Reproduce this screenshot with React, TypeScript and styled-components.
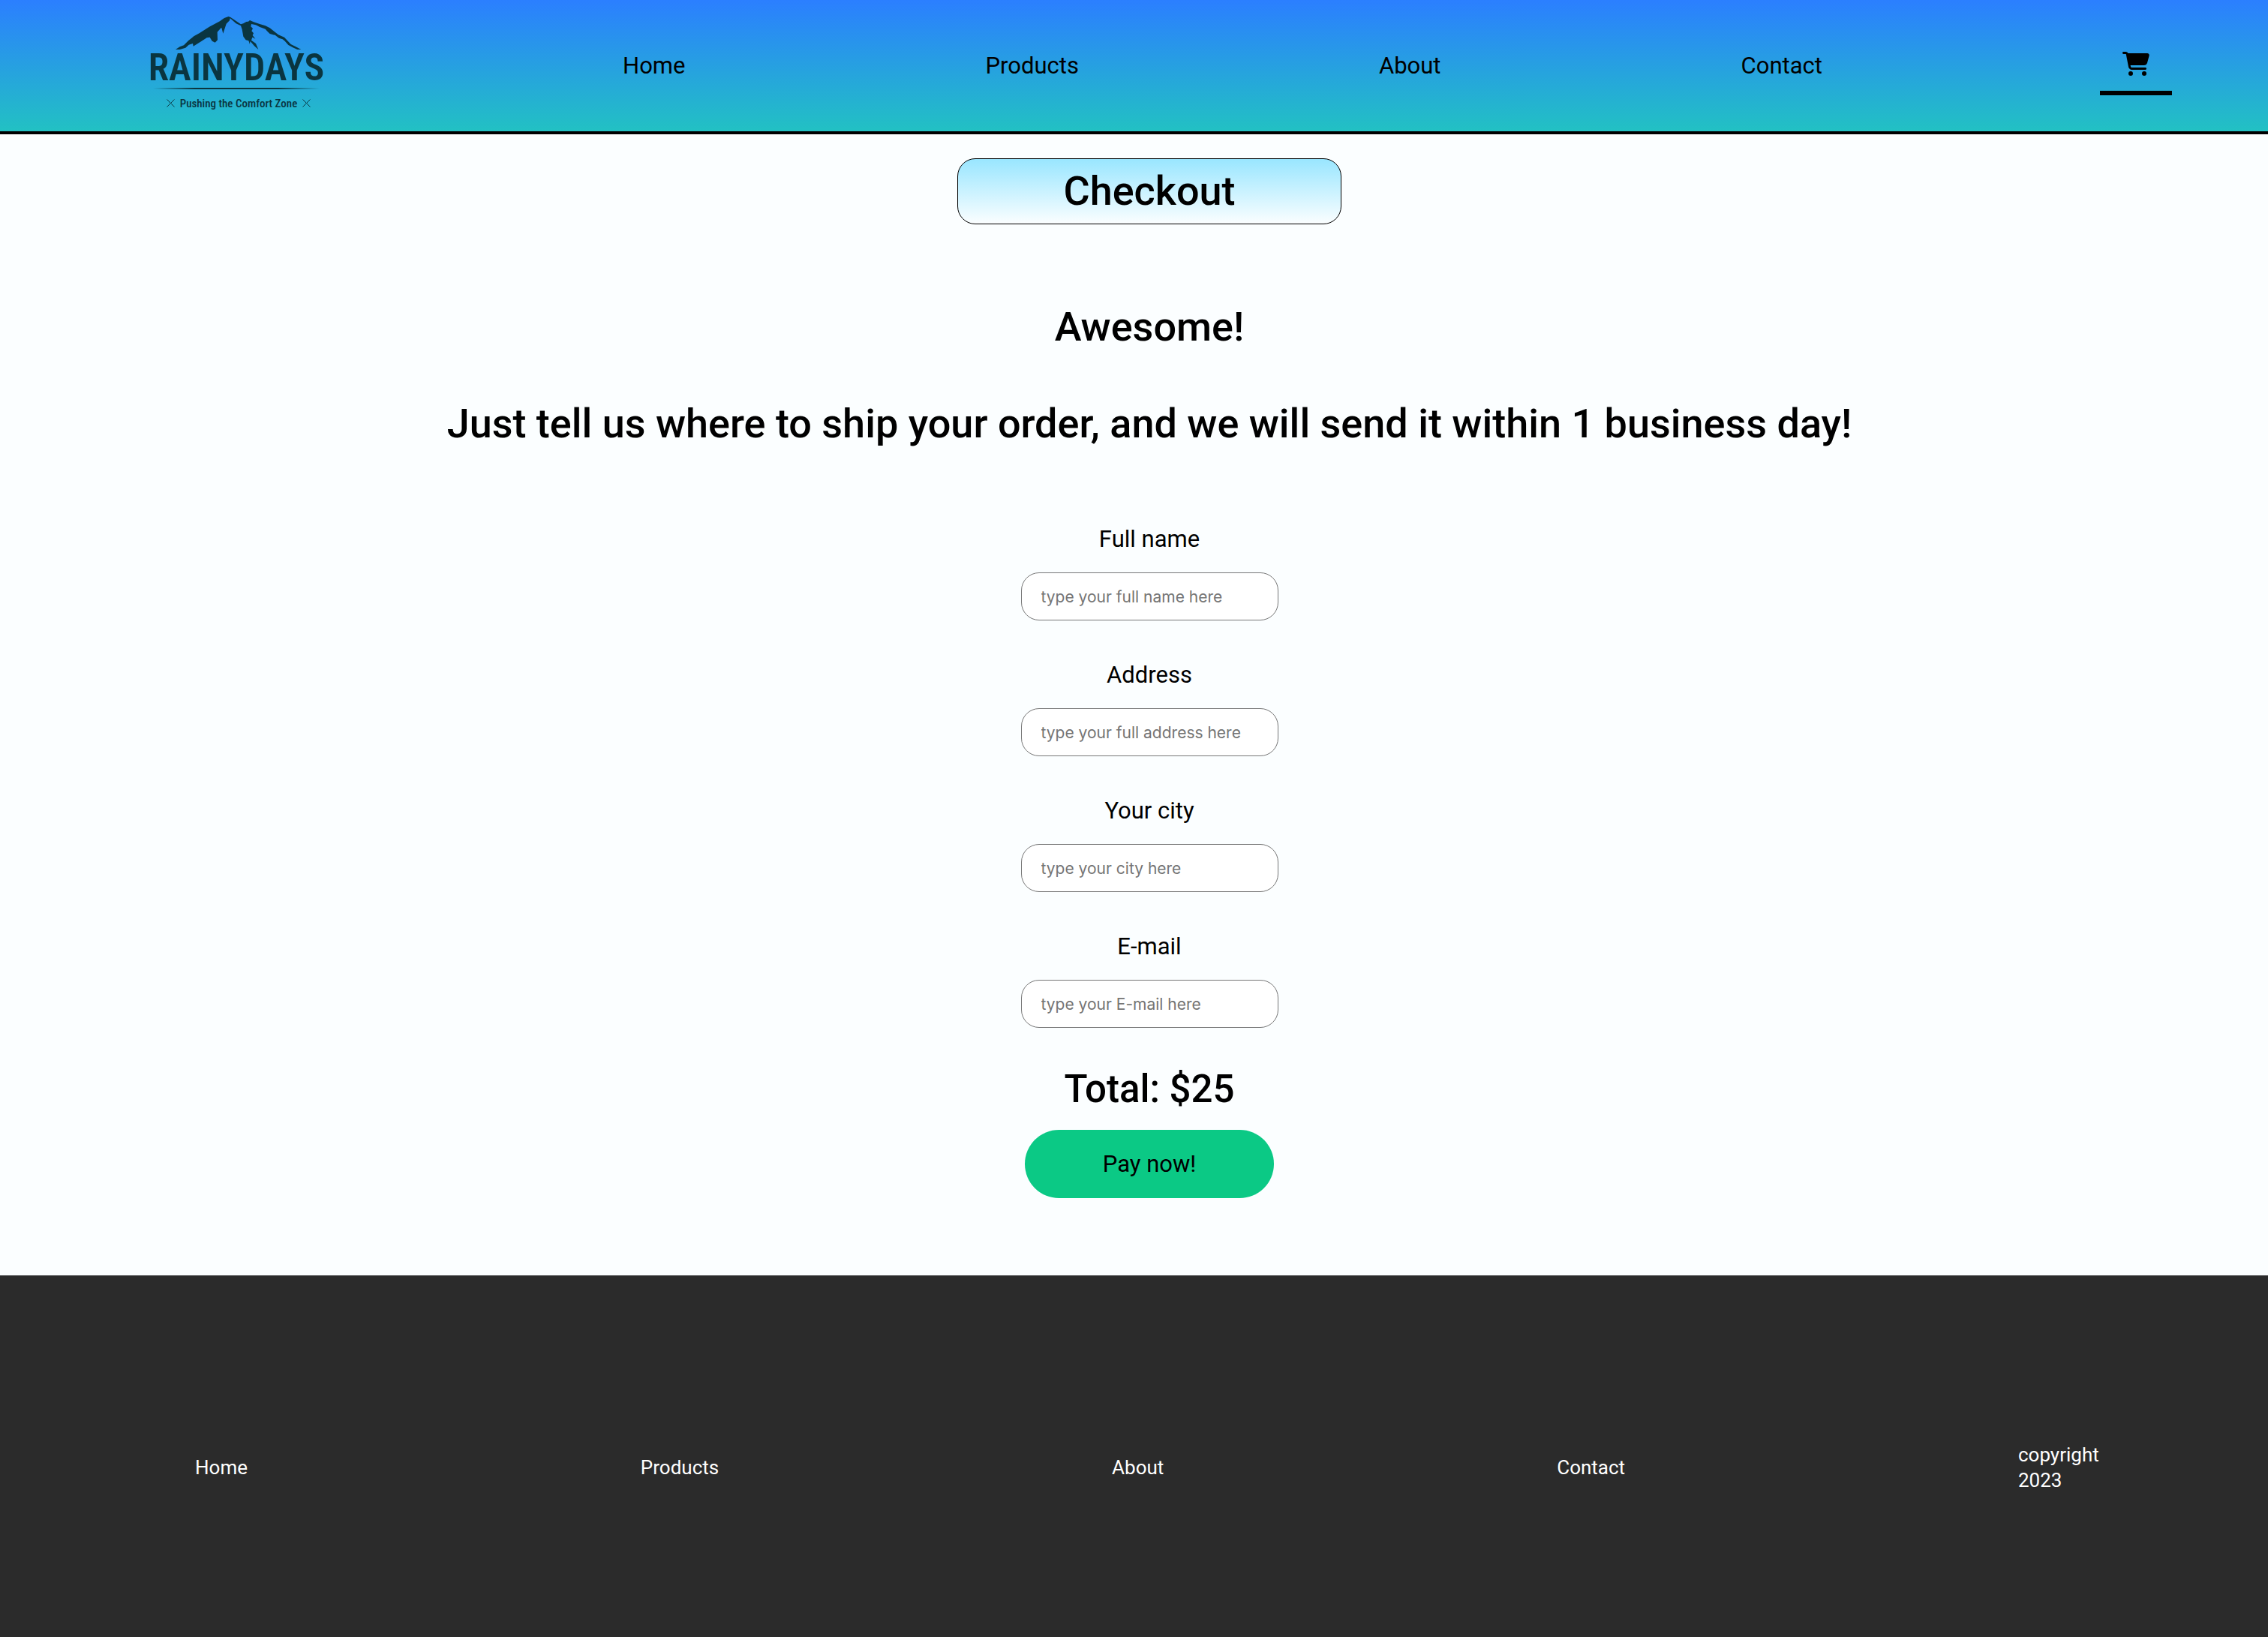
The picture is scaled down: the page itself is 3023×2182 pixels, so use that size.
import React from "react";
import styled, { createGlobalStyle } from "styled-components";
import { FaCartShopping } from "react-icons/fa6";

const GlobalStyle = createGlobalStyle`
  *, *::before, *::after { box-sizing: border-box; }
  body {
    margin: 0;
    background: #fbfeff;
    color: #000;
    font-family: Roboto, "Liberation Sans", sans-serif;
  }
  a { color: inherit; text-decoration: none; }
`;

const Page = styled.div`
  min-height: 100vh;
  display: flex;
  flex-direction: column;
`;

const Header = styled.header`
  background: linear-gradient(#2b7fff, #22c1c3);
  border-bottom: 4px solid #000;
`;

const NavList = styled.ul`
  margin: 0;
  padding: 0 158px 0 200px;
  min-height: 175px;
  list-style: none;
  display: flex;
  align-items: center;
  justify-content: space-between;
`;

const NavLink = styled.a`
  font-size: 31px;
  line-height: 38px;
`;

const CartLink = styled.a`
  display: flex;
  margin: 0 -30px;
  padding: 20px 30px;
  border-bottom: 6px solid #000;
  font-size: 32px;

  svg {
    width: 36px;
    height: 32px;
  }
`;

const Logo = styled.a`
  width: 230px;
  padding-bottom: 8px;
  display: flex;
  flex-direction: column;
  align-items: center;
  color: #0a3540;
`;

const Mountains = styled.svg`
  width: 170px;
  height: 46px;
  margin-left: 6px;
  fill: currentColor;
`;

const Wordmark = styled.span`
  font-family: "Roboto Condensed", "Liberation Sans Narrow", Roboto, sans-serif;
  font-size: 50px;
  font-weight: 600;
  line-height: 46px;
`;

const LogoRule = styled.span`
  width: 222px;
  height: 2px;
  margin-top: 4px;
  background: linear-gradient(90deg, transparent, currentColor 25%, currentColor 75%, transparent);
`;

const Tagline = styled.span`
  margin: 10px 0 0 6px;
  display: flex;
  align-items: center;
  gap: 7px;
  font-family: "Roboto Condensed", "Liberation Sans Narrow", Roboto, sans-serif;
  font-size: 15px;
  font-weight: 500;
  line-height: 18px;
  white-space: nowrap;
`;

const Cross = styled.svg`
  width: 11px;
  height: 11px;
  stroke: currentColor;
  stroke-width: 1;
`;

const Main = styled.main`
  flex: 1;
  padding: 32px 0 103px 41px;
  display: flex;
  flex-direction: column;
  align-items: center;
`;

const Title = styled.h1`
  width: 512px;
  margin: 0 0 104px;
  border: 1px solid #000;
  border-radius: 24px;
  background: linear-gradient(#99e6ff, #fbfeff);
  font-size: 54px;
  font-weight: 500;
  line-height: 86px;
  text-align: center;
`;

const Messages = styled.div`
  display: grid;
  gap: 64px;
  text-align: center;
`;

const Message = styled.h2`
  margin: 0;
  font-size: 54px;
  font-weight: 500;
  line-height: 65px;
`;

const Form = styled.form`
  margin-top: 103px;
  display: flex;
  flex-direction: column;
  align-items: center;
`;

const Fields = styled.div`
  display: grid;
  gap: 54px;
`;

const Field = styled.div`
  display: grid;
  gap: 25px;
  justify-items: center;
`;

const Label = styled.label`
  font-size: 31px;
  line-height: 38px;
`;

const TextInput = styled.input`
  width: 343px;
  height: 64px;
  padding: 0 26px;
  border: 1px solid #767676;
  border-radius: 24px;
  background: #fff;
  font-family: Inter, "Liberation Sans", sans-serif;
  font-size: 21px;

  &::placeholder { color: #757575; opacity: 1; }
`;

const Total = styled.p`
  margin: 50px 0 22px;
  font-size: 51px;
  font-weight: 500;
  line-height: 64px;
`;

const PayButton = styled.button`
  width: 332px;
  height: 91px;
  border: 0;
  border-radius: 46px;
  background: #0bc985;
  color: #000;
  font-family: inherit;
  font-size: 31px;
`;

const Footer = styled.footer`
  padding: 222px 219px 192px 260px;
  background: #2b2b2b;
  color: #fff;
  font-size: 26px;
  line-height: 34px;
`;

const FooterList = styled.ul`
  margin: 0;
  padding: 0;
  list-style: none;
  display: flex;
  align-items: center;
  justify-content: space-between;
`;

const Copyright = styled.li`
  width: 114px;
`;

const links = ["Home", "Products", "About", "Contact"];

const fields = [
  { id: "name", label: "Full name", type: "text", placeholder: "type your full name here" },
  { id: "address", label: "Address", type: "text", placeholder: "type your full address here" },
  { id: "city", label: "Your city", type: "text", placeholder: "type your city here" },
  { id: "email", label: "E-mail", type: "email", placeholder: "type your E-mail here" },
];

function CrossMark() {
  return (
    <Cross viewBox="0 0 11 11" aria-hidden="true">
      <path d="M0.5 0.5L10.5 10.5M10.5 0.5L0.5 10.5" />
    </Cross>
  );
}

function RainyDaysLogo() {
  return (
    <Logo href="#home">
      <Mountains viewBox="160 60 510 138" aria-hidden="true">
        <path d="M163 195L180 184L196 178L214 160L236 142L258 130L298 104L340 82L358 69L375 63L384 67L405 81L424 94L434 91L446 84L454 83L460 78L475 85L497 92L522 100L540 109L555 121L574 136L598 146L612 161L624 174L641 182L665 195L650 195L632 187L614 177L600 161L591 154L576 149L562 138L548 133L534 121L558 137L540 132L530 122L522 113L500 105L484 97L466 93L464 103L472 111L467 121L475 130L471 138L482 152L470 146L466 158L484 171L494 195L478 181L467 168L461 162L460 174L455 160L444 157L434 143L429 115L424 100L405 91L381 70L379 79L366 92L361 107L353 131L348 112L346 107L330 125L331 157L321 167L309 161L300 146L288 148L265 163L234 182L232 171L216 176L203 188L180 195Z" />
      </Mountains>
      <Wordmark>RAINYDAYS</Wordmark>
      <LogoRule />
      <Tagline>
        <CrossMark />
        Pushing the Comfort Zone
        <CrossMark />
      </Tagline>
    </Logo>
  );
}

export default function App() {
  return (
    <>
      <GlobalStyle />
      <Page>
        <Header>
          <nav aria-label="Main">
            <NavList>
              <li><RainyDaysLogo /></li>
              {links.map((name) => (
                <li key={name}>
                  <NavLink href={`#${name.toLowerCase()}`}>{name}</NavLink>
                </li>
              ))}
              <li>
                <CartLink href="#cart" aria-label="Cart" aria-current="page">
                  <FaCartShopping />
                </CartLink>
              </li>
            </NavList>
          </nav>
        </Header>
        <Main>
          <Title>Checkout</Title>
          <Messages>
            <Message>Awesome!</Message>
            <Message>Just tell us where to ship your order, and we will send it within 1 business day!</Message>
          </Messages>
          <Form onSubmit={(event) => event.preventDefault()}>
            <Fields>
              {fields.map((field) => (
                <Field key={field.id}>
                  <Label htmlFor={field.id}>{field.label}</Label>
                  <TextInput id={field.id} name={field.id} type={field.type} placeholder={field.placeholder} />
                </Field>
              ))}
            </Fields>
            <Total>Total: $25</Total>
            <PayButton type="submit">Pay now!</PayButton>
          </Form>
        </Main>
        <Footer>
          <FooterList>
            {links.map((name) => (
              <li key={name}>
                <a href={`#${name.toLowerCase()}`}>{name}</a>
              </li>
            ))}
            <Copyright>copyright 2023</Copyright>
          </FooterList>
        </Footer>
      </Page>
    </>
  );
}
